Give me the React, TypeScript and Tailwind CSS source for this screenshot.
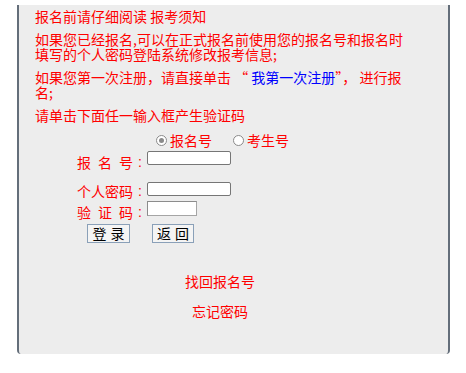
import React from "react";

const font = { fontFamily: '"Noto Sans CJK SC", "Noto Sans", sans-serif' };

function Radio({ checked }: { checked?: boolean }) {
  return (
    <span className="inline-flex h-[11px] w-[11px] items-center justify-center rounded-full border border-[#8a8a8a] bg-white">
      {checked && <span className="h-[5px] w-[5px] rounded-full bg-[#8a8a8a]" />}
    </span>
  );
}

function Spread({ chars }: { chars: string[] }) {
  return (
    <span className="flex w-[56px] justify-between">
      {chars.map((c) => (
        <span key={c}>{c}</span>
      ))}
    </span>
  );
}

function Label({ children }: { children: React.ReactNode }) {
  return (
    <span className="flex w-[70px] leading-[15px] text-[#ff0000]">
      {children}
      <span className="ml-auto mr-[5px] font-['Liberation_Sans']">:</span>
    </span>
  );
}

export default function App() {
  return (
    <div className="h-[373px] w-[466px] bg-white text-[14px]" style={font}>
      <div className="ml-[17px] mt-[5px] h-[349px] w-[433px] rounded-b-[4px] border-x-2 border-[#646e7a] bg-[#ededed] pt-[3.5px]">
        <div className="ml-[16px] w-[370px] text-[#ff0000]">
          <p className="leading-[15px]">报名前请仔细阅读 报考须知</p>
          <p className="mt-[8px] leading-[15px]">
            如果您已经报名,可以在正式报名前使用您的报名号和报名时填写的个人密码登陆系统修改报考信息;
          </p>
          <p className="mt-[8px] leading-[15px]">
            如果您第一次注册，请直接单击 “ <span className="text-[#0000ff]">我第一次注册</span>”， 进行报名;
          </p>
          <p className="mt-[8px] leading-[15px]">请单击下面任一输入框产生验证码</p>

          <div className="mt-[10px] flex h-[15px] items-center leading-[15px]">
            <span className="ml-[121px] flex items-center">
              <Radio checked />
              <span className="ml-[3px]">报名号</span>
            </span>
            <span className="ml-[21px] flex items-center">
              <Radio />
              <span className="ml-[3px]">考生号</span>
            </span>
          </div>

          <div className="ml-[42px] mt-[3.5px] flex items-start">
            <span className="mt-[3.5px]">
              <Label>
                <Spread chars={["报", "名", "号"]} />
              </Label>
            </span>
            <span className="h-[14px] w-[84px] rounded-[2px] border border-[#767676] bg-white" />
          </div>

          <div className="ml-[42px] mt-[12.5px] flex items-start">
            <span className="mt-[1.5px]">
              <Label>个人密码</Label>
            </span>
            <span className="h-[14px] w-[84px] rounded-[2px] border border-[#767676] bg-white" />
          </div>

          <div className="ml-[42px] mt-[2.5px] flex items-start">
            <span className="mt-[3.5px]">
              <Label>
                <Spread chars={["验", "证", "码"]} />
              </Label>
            </span>
            <span className="h-[15px] w-[50px] border border-[#a5a5a5] border-l-[#8c8c8c] border-t-[#8c8c8c] bg-white" />
          </div>

          <div className="ml-[52px] mt-[4px] flex items-start gap-[22px]">
            <span className="flex h-[19px] w-[43px] items-center justify-center gap-[4px] border border-[#8aa0b8] bg-[#f4f4f4] leading-[15px] text-black">
              <span>登</span>
              <span>录</span>
            </span>
            <span className="flex h-[19px] w-[42px] items-center justify-center gap-[4px] border border-[#8aa0b8] bg-[#f4f4f4] leading-[15px] text-black">
              <span>返</span>
              <span>回</span>
            </span>
          </div>

          <p className="mt-[31.5px] text-center leading-[15px]">找回报名号</p>
          <p className="mt-[15px] text-center leading-[15px]">忘记密码</p>
        </div>
      </div>
    </div>
  );
}
